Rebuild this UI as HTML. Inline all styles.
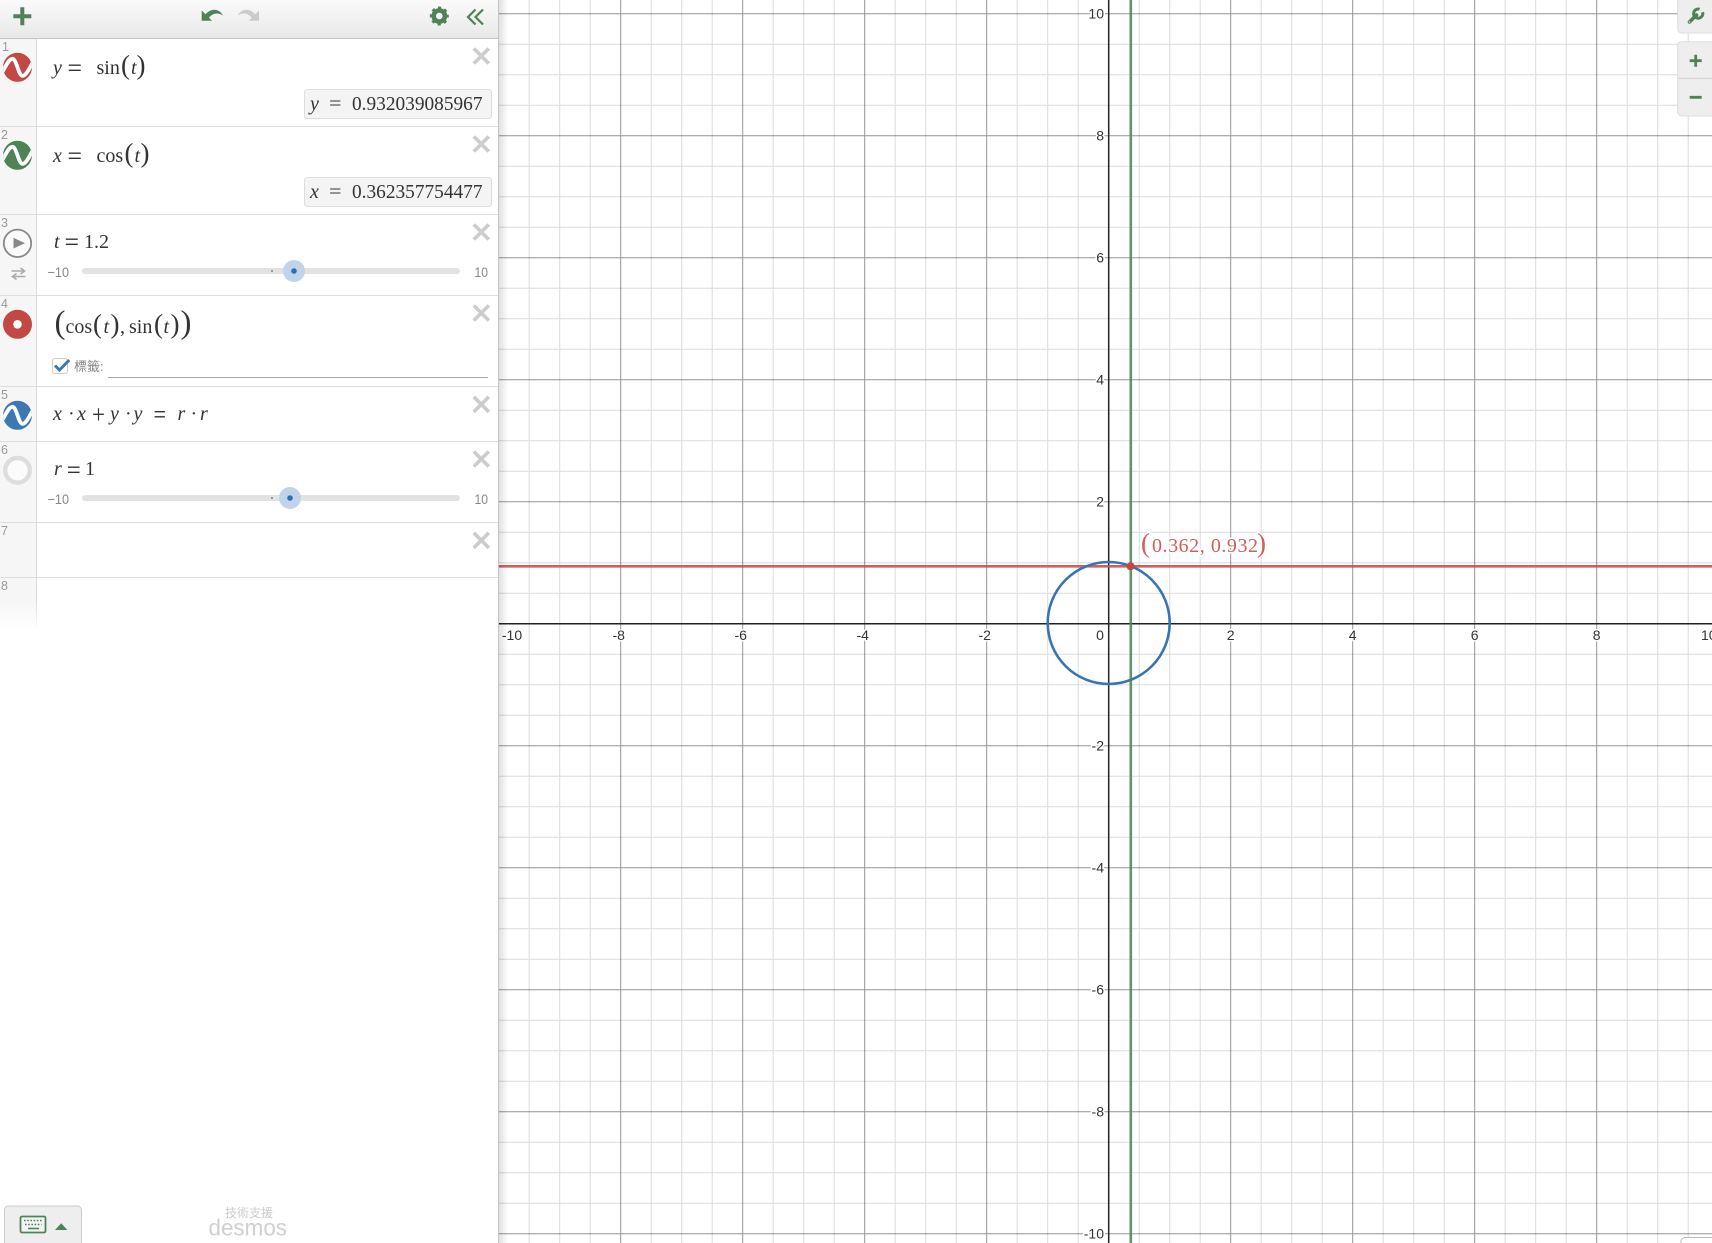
<!DOCTYPE html>
<html><head><meta charset="utf-8"><title>Desmos</title>
<style>
html,body{margin:0;padding:0;background:#fff;width:1712px;height:1243px;overflow:hidden}
svg{display:block;position:absolute;left:0;top:0;filter:blur(.3px)}
text{font-family:"Liberation Serif","Noto Sans CJK TC",serif;fill:#333}
.m{font-size:20px}
.e{font-size:26px}
.i{font-size:20px;font-style:italic}
.p{font-size:27px}
.b{font-size:33px}
.g{font-family:"Liberation Sans",sans-serif;font-size:14px;fill:#333;paint-order:stroke;stroke:#fff;stroke-width:3px;stroke-linejoin:round}
.n{font-family:"Liberation Sans",sans-serif;font-size:12.5px;fill:#999}
.s{font-family:"Liberation Sans",sans-serif;font-size:14px;fill:#888}
.c{font-family:"Liberation Sans","Noto Sans CJK TC",sans-serif;fill:#888}
.o{font-size:19.5px}
.r{fill:#cf5f5b;paint-order:stroke;stroke:#fff;stroke-width:3px;stroke-linejoin:round}
</style></head><body>
<svg width="1712" height="1243" viewBox="0 0 1712 1243" xmlns="http://www.w3.org/2000/svg">
<defs>
<linearGradient id="hd" x1="0" y1="0" x2="0" y2="1"><stop offset="0" stop-color="#fafafa"/><stop offset="1" stop-color="#e8e8e8"/></linearGradient>
<linearGradient id="sh" x1="0" y1="0" x2="1" y2="0"><stop offset="0" stop-color="#000" stop-opacity=".12"/><stop offset="1" stop-color="#000" stop-opacity="0"/></linearGradient>
<linearGradient id="fd" x1="0" y1="0" x2="0" y2="1"><stop offset="0" stop-color="#f6f6f6"/><stop offset=".45" stop-color="#f6f6f6"/><stop offset="1" stop-color="#fff"/></linearGradient>
<linearGradient id="fb" x1="0" y1="0" x2="0" y2="1"><stop offset="0" stop-color="#ddd"/><stop offset=".45" stop-color="#ddd"/><stop offset="1" stop-color="#fff"/></linearGradient>
<clipPath id="cc"><circle r="14.5"/></clipPath>
<g id="x"><path d="M-7.5 -7.5L7.5 7.5M7.5 -7.5L-7.5 7.5" stroke="#ccc" stroke-width="3.6" fill="none"/></g>
<g id="w"><path d="M-16 6C-12 0 -9 -8.5 -5 -8.5C-1 -8.5 1 8.5 5 8.5C9 8.5 12 0 16 -6" stroke="#fff" stroke-width="3.8" fill="none"/></g>
</defs>

<!-- grid -->
<path fill="none" stroke="#000" stroke-opacity=".14" stroke-width="1" d="M529.2 0V1243M559.7 0V1243M590.2 0V1243M651.2 0V1243M681.7 0V1243M712.2 0V1243M773.2 0V1243M803.7 0V1243M834.2 0V1243M895.2 0V1243M925.7 0V1243M956.2 0V1243M1017.2 0V1243M1047.7 0V1243M1078.2 0V1243M1139.2 0V1243M1169.7 0V1243M1200.2 0V1243M1261.2 0V1243M1291.7 0V1243M1322.2 0V1243M1383.2 0V1243M1413.7 0V1243M1444.2 0V1243M1505.2 0V1243M1535.7 0V1243M1566.2 0V1243M1627.2 0V1243M1657.7 0V1243M1688.2 0V1243
M498 44.2H1712M498 74.7H1712M498 105.2H1712M498 166.2H1712M498 196.7H1712M498 227.2H1712M498 288.2H1712M498 318.7H1712M498 349.2H1712M498 410.2H1712M498 440.7H1712M498 471.2H1712M498 532.2H1712M498 562.7H1712M498 593.2H1712M498 654.2H1712M498 684.7H1712M498 715.2H1712M498 776.2H1712M498 806.7H1712M498 837.2H1712M498 898.2H1712M498 928.7H1712M498 959.2H1712M498 1020.2H1712M498 1050.7H1712M498 1081.2H1712M498 1142.2H1712M498 1172.7H1712M498 1203.2H1712"/>
<path fill="none" stroke="#000" stroke-opacity=".42" stroke-width="1" d="M620.7 0V1243M742.7 0V1243M864.7 0V1243M986.7 0V1243M1230.7 0V1243M1352.7 0V1243M1474.7 0V1243M1596.7 0V1243
M498 13.7H1712M498 135.7H1712M498 257.7H1712M498 379.7H1712M498 501.7H1712M498 745.7H1712M498 867.7H1712M498 989.7H1712M498 1111.7H1712M498 1233.7H1712"/>
<path fill="none" stroke="#222" stroke-width="1.5" d="M1108.7 0V1243M498 623.7H1712"/>

<!-- labels -->
<g>
<text class="g" x="1104" y="18.5" text-anchor="end">10</text>
<text class="g" x="1104" y="140.5" text-anchor="end">8</text>
<text class="g" x="1104" y="262.5" text-anchor="end">6</text>
<text class="g" x="1104" y="384.5" text-anchor="end">4</text>
<text class="g" x="1104" y="506.5" text-anchor="end">2</text>
<text class="g" x="1104" y="750.5" text-anchor="end">-2</text>
<text class="g" x="1104" y="872.5" text-anchor="end">-4</text>
<text class="g" x="1104" y="994.5" text-anchor="end">-6</text>
<text class="g" x="1104" y="1116.5" text-anchor="end">-8</text>
<text class="g" x="1104" y="1238.5" text-anchor="end">-10</text>
<text class="g" x="512" y="640" text-anchor="middle">-10</text>
<text class="g" x="618.7" y="640" text-anchor="middle">-8</text>
<text class="g" x="740.7" y="640" text-anchor="middle">-6</text>
<text class="g" x="862.7" y="640" text-anchor="middle">-4</text>
<text class="g" x="984.7" y="640" text-anchor="middle">-2</text>
<text class="g" x="1100" y="640" text-anchor="middle">0</text>
<text class="g" x="1230.7" y="640" text-anchor="middle">2</text>
<text class="g" x="1352.7" y="640" text-anchor="middle">4</text>
<text class="g" x="1474.7" y="640" text-anchor="middle">6</text>
<text class="g" x="1596.7" y="640" text-anchor="middle">8</text>
<text class="g" x="1701" y="640">10</text>
</g>

<!-- curves -->
<line x1="1130.8" y1="0" x2="1130.8" y2="1243" stroke="#4f8a5c" stroke-width="2.6" stroke-opacity=".9"/>
<line x1="498" y1="566.3" x2="1712" y2="566.3" stroke="#cc4f4b" stroke-width="2.6" stroke-opacity=".9"/>
<circle cx="1108.7" cy="623" r="61" fill="none" stroke="#3575b3" stroke-width="2.6"/>
<circle cx="1130.6" cy="566.3" r="4" fill="#c74440"/>
<text class="r" x="1141" y="552" font-size="27">(</text>
<text class="r" x="1152" y="552" font-size="20" textLength="106">0.362, 0.932</text>
<text class="r" x="1257" y="552" font-size="27">)</text>

<!-- right controls -->
<path d="M1677.7 -5V29a4 4 0 0 0 4 4H1713V-5Z" fill="#eee" stroke="#ddd"/>
<path d="M1689.5 22L1696.5 15" stroke="#4f8257" stroke-width="3.6" stroke-linecap="round" fill="none"/>
<path d="M1702.6 12.2A4.6 4.6 0 1 1 1699.6 9.2" stroke="#4f8257" stroke-width="3" fill="none"/>
<circle cx="1689.5" cy="22" r=".7" fill="#eee"/>
<path d="M1713 41.7H1681.7a4 4 0 0 0 -4 4V112a4 4 0 0 0 4 4H1713Z" fill="#eee" stroke="#ddd"/>
<line x1="1678" y1="78.3" x2="1712" y2="78.3" stroke="#ccc"/>
<path d="M1689.7 60.7H1701.7M1695.7 54.7V66.7M1689.7 97.3H1701.7" stroke="#4f8257" stroke-width="2.8" fill="none"/>
<path d="M1712.5 1237.5H1685a4 4 0 0 0 -4 4V1244H1712.5Z" fill="#fff" stroke="#bbb"/>

<!-- panel -->
<rect x="499" y="0" width="9" height="1243" fill="url(#sh)"/>
<rect x="0" y="0" width="498" height="1243" fill="#fff"/>
<rect x="0" y="39" width="36" height="538" fill="#f6f6f6"/>
<rect x="0" y="577" width="36" height="53" fill="url(#fd)"/>
<path d="M36.5 39V577" stroke="#ddd"/>
<rect x="36" y="577" width="1" height="53" fill="url(#fb)"/>
<rect x="0" y="0" width="498" height="38" fill="url(#hd)"/>
<path d="M0 38.5H498" stroke="#c4c4c4"/>
<path d="M0 126.5H498M0 214.5H498M0 295.5H498M0 386.5H498M0 441.5H498M0 522.5H498M0 577.5H498" stroke="#ddd"/>
<path d="M498.5 0V1243" stroke="#c6c6c6"/>

<!-- header icons -->
<path d="M13.3 16.3H31.3M22.3 7.3V25.3" stroke="#4f8257" stroke-width="4" fill="none"/>
<g fill="#4f8257"><path d="M201.7 10.5V20.7H212Z"/><path d="M205 15C210 8.5 218.5 7.5 223 15.5C218 12.3 212.5 13 208.8 18Z"/></g>
<g fill="#ccc" transform="translate(460.7 0) scale(-1 1)"><path d="M201.7 10.5V20.7H212Z"/><path d="M205 15C210 8.5 218.5 7.5 223 15.5C218 12.3 212.5 13 208.8 18Z"/></g>
<g transform="translate(439.3 16)" fill="none" stroke="#4f8257"><circle r="5.6" stroke-width="4.6"/><circle r="8.2" stroke-width="2.6" stroke-dasharray="3.1 3.34" stroke-dashoffset="1.55"/></g>
<path d="M475.5 9.5L468 17L475.5 24.5M483 9.5L475.5 17L483 24.5" stroke="#4f8257" stroke-width="2.2" fill="none"/>

<!-- row numbers -->
<text class="n" x="2" y="51">1</text>
<text class="n" x="1" y="139">2</text>
<text class="n" x="1" y="227">3</text>
<text class="n" x="1" y="308">4</text>
<text class="n" x="1" y="399">5</text>
<text class="n" x="1" y="454">6</text>
<text class="n" x="1" y="535">7</text>
<text class="n" x="1" y="590">8</text>

<!-- row icons -->
<g transform="translate(17.5 67.3)"><circle r="14.5" fill="#c24844"/><g clip-path="url(#cc)"><use href="#w"/></g></g>
<g transform="translate(17.5 155.3)"><circle r="14.5" fill="#4f8257"/><g clip-path="url(#cc)"><use href="#w"/></g></g>
<circle cx="17.5" cy="243.3" r="13.7" fill="#fafafa" stroke="#888" stroke-width="1.8"/>
<path d="M13.5 237.7L25 243.2L13.5 248.5Z" fill="#888"/>
<path d="M11.5 271H24M20.5 268L24.5 271L20.5 274M25.5 276.5H13M16.5 273.5L12.5 276.5L16.5 279.5" fill="none" stroke="#aaa" stroke-width="1.6"/>
<circle cx="17.5" cy="324.3" r="14.5" fill="#c24844"/><circle cx="17.5" cy="324.3" r="4.3" fill="#fff"/>
<g transform="translate(17.5 415.3)"><circle r="14.5" fill="#3d78b3"/><g clip-path="url(#cc)"><use href="#w"/></g></g>
<circle cx="17.5" cy="470.3" r="12.3" fill="#fbfbfb" stroke="#ddd" stroke-width="4.4"/>

<!-- X buttons -->
<use href="#x" x="481.3" y="56"/><use href="#x" x="481.3" y="144"/><use href="#x" x="481.3" y="232"/><use href="#x" x="481.3" y="313"/><use href="#x" x="481.3" y="404.3"/><use href="#x" x="481.3" y="459"/><use href="#x" x="481.3" y="540.3"/>

<!-- row 1 -->
<text class="i" x="53" y="74">y</text><text class="e" x="67.5" y="76.5" textLength="14.5" lengthAdjust="spacingAndGlyphs">=</text>
<text class="m" x="96.5" y="74">sin</text><text class="p" x="121" y="74">(</text><text class="i" x="131" y="74">t</text><text class="p" x="136.5" y="74">)</text>
<rect x="304.5" y="89.5" width="187" height="29" rx="3" fill="#f4f4f4" stroke="#ddd"/>
<text class="i" x="310" y="110">y</text><text class="m" x="329" y="110" textLength="12.5" lengthAdjust="spacingAndGlyphs">=</text>
<text class="o" x="352" y="110" textLength="130.5" lengthAdjust="spacingAndGlyphs">0.932039085967</text>

<!-- row 2 -->
<text class="i" x="53" y="162">x</text><text class="e" x="67.5" y="164.5" textLength="14.5" lengthAdjust="spacingAndGlyphs">=</text>
<text class="m" x="96.5" y="162">cos</text><text class="p" x="124.5" y="162">(</text><text class="i" x="134.5" y="162">t</text><text class="p" x="140.5" y="162">)</text>
<rect x="304.5" y="177.5" width="187" height="29" rx="3" fill="#f4f4f4" stroke="#ddd"/>
<text class="i" x="310" y="198">x</text><text class="m" x="329" y="198" textLength="12.5" lengthAdjust="spacingAndGlyphs">=</text>
<text class="o" x="352" y="198" textLength="130.5" lengthAdjust="spacingAndGlyphs">0.362357754477</text>

<!-- row 3 -->
<text class="i" x="54" y="248">t</text><text class="e" x="64.5" y="250.5" textLength="14.5" lengthAdjust="spacingAndGlyphs">=</text><text class="m" x="84" y="248">1.2</text>
<rect x="82" y="268" width="378" height="6" rx="3" fill="#e2e2e2"/>
<rect x="271" y="270" width="2" height="2" fill="#999"/>
<circle cx="294" cy="271" r="11" fill="#c1d3e8"/><circle cx="294" cy="271" r="2.8" fill="#2d70b3"/>
<text class="s" x="47.5" y="277" textLength="21.5" lengthAdjust="spacingAndGlyphs">−10</text>
<text class="s" x="474.5" y="277" textLength="13.5" lengthAdjust="spacingAndGlyphs">10</text>

<!-- row 4 -->
<text class="b" x="54.5" y="333">(</text>
<text class="m" x="65.5" y="333">cos</text><text class="p" x="93" y="333">(</text><text class="i" x="103.5" y="333">t</text><text class="p" x="110.5" y="333">)</text>
<text class="m" x="120" y="333">,</text>
<text class="m" x="129" y="333">sin</text><text class="p" x="154" y="333">(</text><text class="i" x="163.5" y="333">t</text><text class="p" x="170.5" y="333">)</text>
<text class="b" x="180.5" y="333">)</text>
<rect x="52.5" y="358.5" width="15" height="15" rx="2.5" fill="#fff" stroke="#ccc"/>
<path d="M55 365.5L59.5 370L69.3 360" fill="none" stroke="#3d78b3" stroke-width="3"/>
<text class="c" x="74" y="371" font-size="13">標籤:</text>
<path d="M108 377.5H488" stroke="#aaa"/>

<!-- row 5 -->
<text class="i" x="53" y="420">x</text><text class="m" x="68" y="420">·</text><text class="i" x="77" y="420">x</text>
<text class="e" x="92" y="423" textLength="13" lengthAdjust="spacingAndGlyphs">+</text><text class="i" x="110" y="420">y</text><text class="m" x="125" y="420">·</text><text class="i" x="133.5" y="420">y</text>
<text class="e" x="153.5" y="423" textLength="12.5" lengthAdjust="spacingAndGlyphs">=</text><text class="i" x="177.5" y="420">r</text><text class="m" x="190.5" y="420">·</text><text class="i" x="200" y="420">r</text>

<!-- row 6 -->
<text class="i" x="54" y="475">r</text><text class="e" x="66.8" y="478.5" textLength="14" lengthAdjust="spacingAndGlyphs">=</text><text class="m" x="85" y="475">1</text>
<rect x="82" y="495" width="378" height="6" rx="3" fill="#e2e2e2"/>
<rect x="271" y="497" width="2" height="2" fill="#999"/>
<circle cx="290" cy="498" r="11" fill="#c1d3e8"/><circle cx="290" cy="498" r="2.8" fill="#2d70b3"/>
<text class="s" x="47.5" y="504" textLength="21.5" lengthAdjust="spacingAndGlyphs">−10</text>
<text class="s" x="474.5" y="504" textLength="13.5" lengthAdjust="spacingAndGlyphs">10</text>

<!-- keyboard -->
<path d="M4.5 1244V1210a4 4 0 0 1 4 -4H77.5a4 4 0 0 1 4 4V1244Z" fill="#eee" stroke="#ccc"/>
<rect x="20.5" y="1216.5" width="25" height="16" rx="1.5" fill="#f4f4f4" stroke="#4f8257" stroke-width="1.8"/>
<path d="M24 1220.5H42.5M25 1224.5H41.5" stroke="#4f8257" stroke-width="1.6" stroke-dasharray="1.6 1.6" fill="none"/>
<path d="M28 1228.5H39" stroke="#4f8257" stroke-width="1.6"/>
<path d="M55 1230L61.2 1223.3L67.4 1230Z" fill="#4f8257"/>

<!-- branding -->
<text class="c" x="225" y="1217" font-size="12" textLength="48" style="fill:#ccc">技術支援</text>
<text class="c" x="208.5" y="1235.7" font-size="23" textLength="78.5" lengthAdjust="spacingAndGlyphs" style="fill:#d0d0d0">desmos</text>
</svg>
</body></html>
